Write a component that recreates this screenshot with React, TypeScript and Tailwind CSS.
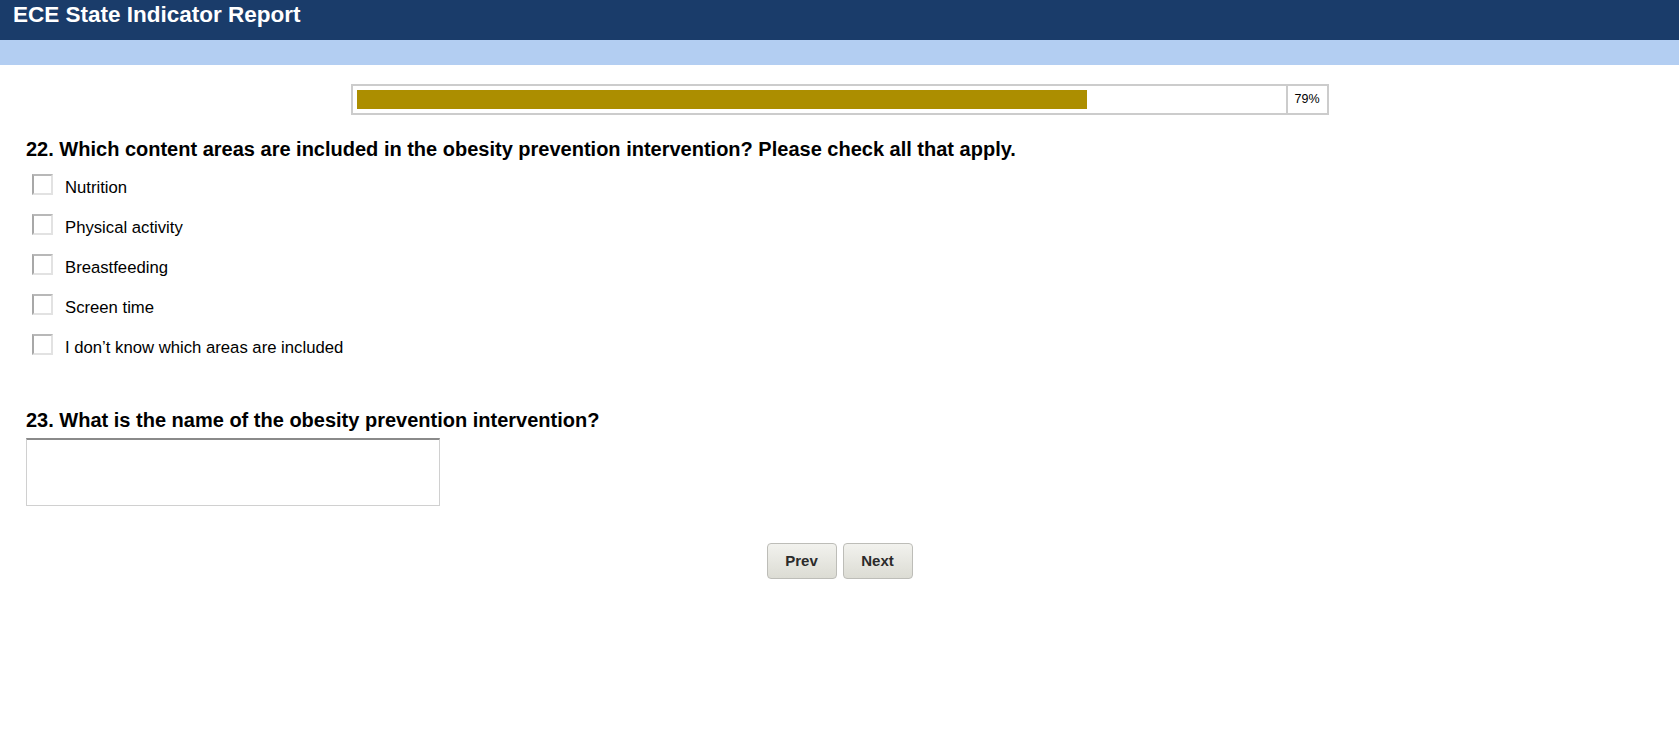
import React from "react";

const options = [
  "Nutrition",
  "Physical activity",
  "Breastfeeding",
  "Screen time",
  "I don\u2019t know which areas are included",
];

export default function App() {
  const pct = 79;
  return (
    <div className="min-h-[751px] bg-white text-black" style={{ fontFamily: '"Liberation Sans", Arial, sans-serif' }}>
      <div className="h-[40px] bg-[#1a3c6a] flex items-start pl-[13px] pt-[2px]">
        <h1 className="text-white font-bold text-[22.5px] leading-[26px]">ECE State Indicator Report</h1>
      </div>
      <div className="h-[25px] bg-[#b3cef2]" />

      <div className="flex justify-center mt-[19px]">
        <div className="w-[978px] h-[31px] border-2 border-[#cccccc] flex">
          <div className="flex-1 p-[4px]">
            <div className="h-full bg-[#ac8e00]" style={{ width: `${pct}%` }} />
          </div>
          <div className="w-[41px] border-l-2 border-[#cccccc] flex items-center justify-center text-[12.5px]">
            {pct}%
          </div>
        </div>
      </div>

      <div className="pl-[26px]">
        <h2 className="mt-[23px] font-bold text-[20px] leading-[22px]">
          22. Which content areas are included in the obesity prevention intervention? Please check all that apply.
        </h2>
        <div className="mt-[14px] flex flex-col gap-[19px] pl-[6px]">
          {options.map((o) => (
            <label key={o} className="flex items-center h-[21px]">
              <span className="w-[21px] h-[21px] box-border border-2 border-t-[#b8b8b8] border-l-[#a8a8a8] border-r-[#e2e2e2] border-b-[#e2e2e2] bg-white" />
              <span className="ml-[12px] text-[16.7px] leading-[19px] mt-[5px]">{o}</span>
            </label>
          ))}
        </div>

        <h2 className="mt-[54px] font-bold text-[20px] leading-[22px]">
          23. What is the name of the obesity prevention intervention?
        </h2>
        <textarea className="mt-[7px] block w-[414px] h-[68px] border border-[#d0d0d0] border-t-2 border-t-[#8a8a8a] resize-none outline-none bg-white" />
      </div>

      <div className="mt-[37px] flex justify-center gap-[6px]">
        <button className="w-[70px] h-[36px] rounded-[4px] border border-[#bdbdb8] bg-gradient-to-b from-[#f2f2ee] to-[#dcdcd4] text-[15px] font-bold text-[#2b2b2b]">
          Prev
        </button>
        <button className="w-[70px] h-[36px] rounded-[4px] border border-[#bdbdb8] bg-gradient-to-b from-[#f2f2ee] to-[#dcdcd4] text-[15px] font-bold text-[#2b2b2b]">
          Next
        </button>
      </div>
    </div>
  );
}
